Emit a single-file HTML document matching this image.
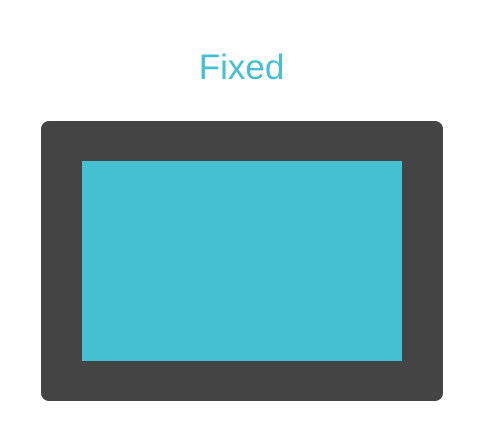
<!DOCTYPE html>
<html><head><style>
html,body{margin:0;padding:0;background:#fff;width:480px;height:440px;overflow:hidden;}
.t{position:absolute;left:0;width:483px;top:48px;text-align:center;font-family:"Liberation Sans",sans-serif;font-size:35px;color:#45bfd2;line-height:40px;}
.o{position:absolute;left:41px;top:121px;width:402px;height:280px;background:#444;border-radius:8px;}
.i{position:absolute;left:82px;top:161px;width:320px;height:200px;background:#45bfd2;}
</style></head><body>
<div class="t">Fixed</div>
<div class="o"></div>
<div class="i"></div>
</body></html>
